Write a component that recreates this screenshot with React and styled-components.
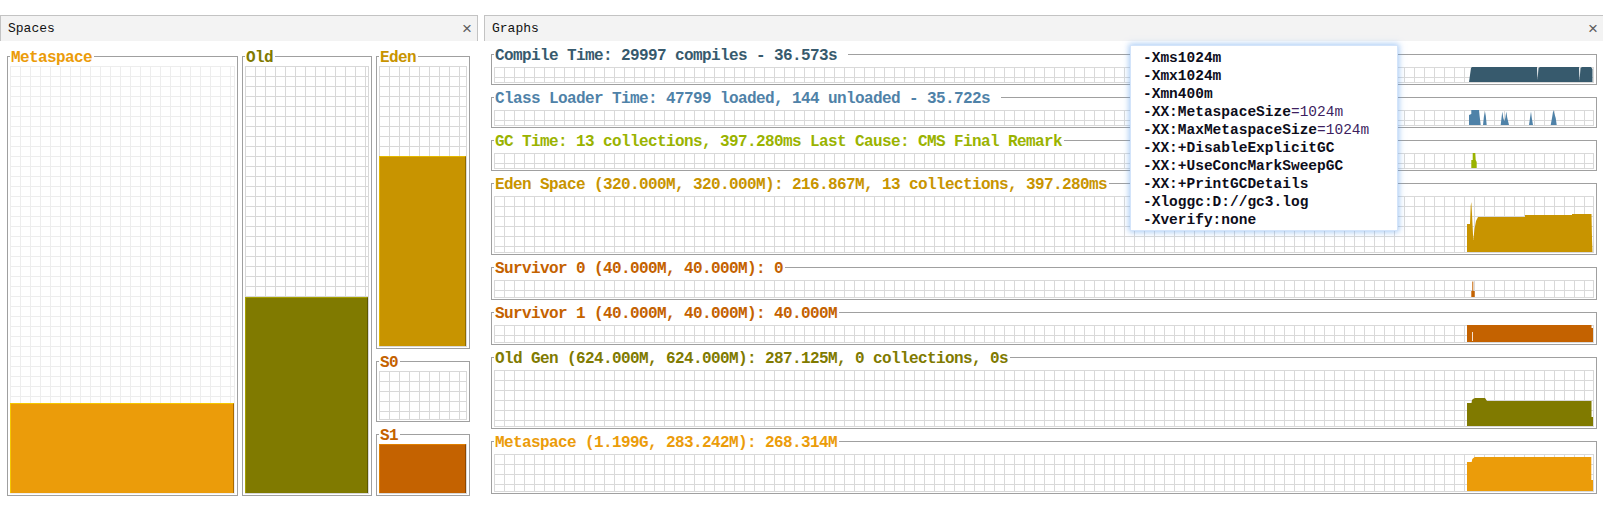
import React from "react";
import styled, { createGlobalStyle } from "styled-components";

const GlobalStyle = createGlobalStyle`
  html, body {
    margin: 0;
    padding: 0;
    background: #ffffff;
  }
  body {
    font-family: "Liberation Mono", "DejaVu Sans Mono", monospace;
  }
`;

const Page = styled.div`
  position: relative;
  width: 1603px;
  height: 505px;
  padding-top: 15px;
  box-sizing: border-box;
  display: flex;
  gap: 6px;
  overflow: hidden;
`;

const Panel = styled.section`
  flex: none;
  width: ${(p) => p.$width}px;
  display: flex;
  flex-direction: column;
`;

const PanelHeader = styled.header`
  flex: none;
  height: 25px;
  display: flex;
  align-items: center;
  justify-content: space-between;
  padding: 0 5px 0 7px;
  border: 1px solid #c3c3c3;
  border-bottom: none;
  background: #f3f3f3;
  font-size: 13px;
  color: #111111;
`;

const Close = styled.span`
  font-family: "Liberation Sans", Arial, sans-serif;
  font-size: 17px;
  line-height: 1;
  color: #5c5c5c;
`;

const SpacesBody = styled.div`
  display: flex;
  gap: 4px;
  padding: 6px 0 0 7px;
`;

const Column = styled.div`
  flex: none;
  width: ${(p) => p.$width}px;
  display: flex;
  flex-direction: column;
  gap: 3px;
`;

const GraphsBody = styled.div`
  display: flex;
  flex-direction: column;
  gap: 3px;
  padding: 4px 7px 0 7px;
`;

const Box = styled.fieldset`
  margin: 0;
  min-width: 0;
  padding: ${(p) => (p.$compact ? "0 2px 1px" : "3px 2px 1px")};
  border: 1px solid #a0a0a0;
`;

const Title = styled.legend`
  padding: 4px 2px 0 1px;
  font-size: 16px;
  letter-spacing: -0.6px;
  font-weight: bold;
  line-height: 15px;
  white-space: pre;
  color: ${(p) => p.$color};
`;

const Grid = styled.div`
  height: ${(p) => p.$h}px;
  box-sizing: border-box;
  display: flex;
  flex-direction: ${(p) => (p.$vertical ? "column" : "row")};
  justify-content: flex-end;
  border-right: 1px solid ${(p) => p.$line};
  border-bottom: 1px solid ${(p) => p.$line};
  background-color: #ffffff;
  background-image: linear-gradient(to right, ${(p) => p.$line} 1px, transparent 1px),
    linear-gradient(to bottom, ${(p) => p.$line} 1px, transparent 1px);
  background-size: 10px 10px;
`;

const Fill = styled.div`
  flex: none;
  height: ${(p) => p.$pct}%;
  box-sizing: border-box;
  background: ${(p) => p.$color};
  border-top: 1px solid ${(p) => p.$light};
  border-left: 1px solid ${(p) => p.$light};
  border-right: 1px solid ${(p) => p.$dark};
`;

const Plot = styled.svg`
  flex: none;
  display: block;
  width: 126px;
  height: 100%;
`;

const Tip = styled.div`
  position: absolute;
  left: 1130px;
  top: 45px;
  z-index: 2;
  width: 268px;
  box-sizing: border-box;
  padding: 3px 8px 1px 12px;
  background: #ffffff;
  border: 1px solid #d3e4fa;
  box-shadow: 0 0 6px 1px rgba(90, 155, 235, 0.55);
`;

const TipRow = styled.div`
  font-size: 14.5px;
  line-height: 18px;
  font-weight: bold;
  color: #0d0d1a;
  white-space: nowrap;
`;

const TipValue = styled.span`
  font-weight: normal;
  color: #3d1f5f;
`;

const spaces = [
  {
    width: 231,
    items: [
      { title: "Metaspace", color: "#eb9c0a", h: 428, line: "#ededed", fill: { pct: 21.1, color: "#eb9c0a", light: "#f6c800", dark: "#a86a00" } },
    ],
  },
  {
    width: 130,
    items: [
      { title: "Old", color: "#807a00", h: 428, line: "#d8d8d8", fill: { pct: 45.9, color: "#807a00", light: "#a6a000", dark: "#5c5800" } },
    ],
  },
  {
    width: 94,
    items: [
      { title: "Eden", color: "#c89400", h: 281, line: "#d8d8d8", fill: { pct: 67.9, color: "#c89400", light: "#e4b800", dark: "#8e6a00" } },
      { title: "S0", color: "#c46200", h: 49, line: "#d8d8d8" },
      { title: "S1", color: "#c46200", h: 50, line: "#d8d8d8", fill: { pct: 100, color: "#c46200", light: "#e08000", dark: "#8c4600" } },
    ],
  },
];

const graphs = [
  {
    title: "Compile Time: 29997 compiles - 36.573s ",
    color: "#375a6d",
    h: 16,
    vh: 15,
    shapes: ["2,15 4,1 5,0 70,0 70.5,13 71.5,1 73,0 112,0 112.5,14 113.5,1 115,0 124,0 125.5,2 125.5,15"],
  },
  {
    title: "Class Loader Time: 47799 loaded, 144 unloaded - 35.722s ",
    color: "#4f82a8",
    h: 16,
    vh: 15,
    shapes: [
      "2,15 2,5 4.3,4 4.3,0 12,0 12.5,5 13.7,15",
      "16,15 17,6 18,1.5 18.8,6 19.7,15",
      "33.7,15 34.5,8 35.3,1.5 36.3,8 37.3,11 38.3,8 39.3,1.5 40.3,8 42,15",
      "62,15 63,8 64,1.5 64.8,8 66,15",
      "83.7,15 85,8 86.3,0 87.5,4 88.7,8 89.7,15",
    ],
  },
  {
    title: "GC Time: 13 collections, 397.280ms Last Cause: CMS Final Remark",
    color: "#9ab300",
    h: 16,
    vh: 15,
    shapes: ["4.3,15 4.3,7 5.7,7 5.7,0 8.3,0 8.7,7 9.7,9 9.7,15"],
  },
  {
    title: "Eden Space (320.000M, 320.000M): 216.867M, 13 collections, 397.280ms",
    color: "#c89400",
    h: 57,
    vh: 56,
    shapes: ["0,56 0,28 3,28 3.7,10 4.3,6 5,18 6.3,44 7.5,33 9,25 11,21 58,21 58,19 105,19 105,18 124.5,18 125,42 125.5,56"],
  },
  {
    title: "Survivor 0 (40.000M, 40.000M): 0",
    color: "#c46200",
    h: 18,
    vh: 17,
    shapes: ["4.3,17 4.3,11 5.3,11 5.3,1.5 6.3,1.5 6.3,11 7.7,11 7.7,17"],
  },
  {
    title: "Survivor 1 (40.000M, 40.000M): 40.000M",
    color: "#c46200",
    h: 18,
    vh: 17,
    shapes: ["0,17 0,0 124.5,0 124.5,3 126,3 126,17"],
    notch: "5,7 6,7 6,16 5,16",
  },
  {
    title: "Old Gen (624.000M, 624.000M): 287.125M, 0 collections, 0s",
    color: "#807a00",
    h: 57,
    vh: 56,
    shapes: ["0,56 0,33 4.5,33 5,30 6,29 8,28 18,28 20,31 124.5,31 124.5,47 126,47 126,56"],
  },
  {
    title: "Metaspace (1.199G, 283.242M): 268.314M",
    color: "#eb9c0a",
    h: 38,
    vh: 37,
    shapes: ["0,37 0,8 4.7,8 5.3,5 7.7,3 124.3,3 124.3,26 126,26 126,37"],
  },
];

const jvmArgs = [
  ["-Xms1024m"],
  ["-Xmx1024m"],
  ["-Xmn400m"],
  ["-XX:MetaspaceSize", "=1024m"],
  ["-XX:MaxMetaspaceSize", "=1024m"],
  ["-XX:+DisableExplicitGC"],
  ["-XX:+UseConcMarkSweepGC"],
  ["-XX:+PrintGCDetails"],
  ["-Xloggc:D://gc3.log"],
  ["-Xverify:none"],
];

const GraphBox = ({ graph }) => (
  <Box>
    <Title $color={graph.color}>{graph.title}</Title>
    <Grid $h={graph.h} $line="#d9d9d9">
      <Plot viewBox={`0 0 126 ${graph.vh}`} preserveAspectRatio="none">
        {graph.shapes.map((pts) => (
          <polygon key={pts} points={pts} fill={graph.color} />
        ))}
        {graph.notch && <polygon points={graph.notch} fill="#f6e2d2" />}
      </Plot>
    </Grid>
  </Box>
);

const SpaceBox = ({ item }) => (
  <Box $compact>
    <Title $color={item.color}>{item.title}</Title>
    <Grid $h={item.h} $line={item.line} $vertical>
      {item.fill && (
        <Fill
          $pct={item.fill.pct}
          $color={item.fill.color}
          $light={item.fill.light}
          $dark={item.fill.dark}
        />
      )}
    </Grid>
  </Box>
);

export default function App() {
  return (
    <>
      <GlobalStyle />
      <Page>
        <Panel $width={478}>
          <PanelHeader>
            <span>Spaces</span>
            <Close>×</Close>
          </PanelHeader>
          <SpacesBody>
            {spaces.map((col, i) => (
              <Column key={i} $width={col.width}>
                {col.items.map((item) => (
                  <SpaceBox key={item.title} item={item} />
                ))}
              </Column>
            ))}
          </SpacesBody>
        </Panel>
        <Panel $width={1120}>
          <PanelHeader>
            <span>Graphs</span>
            <Close>×</Close>
          </PanelHeader>
          <GraphsBody>
            {graphs.map((g) => (
              <GraphBox key={g.title} graph={g} />
            ))}
          </GraphsBody>
        </Panel>
        <Tip>
          {jvmArgs.map(([key, value]) => (
            <TipRow key={key}>
              {key}
              {value && <TipValue>{value}</TipValue>}
            </TipRow>
          ))}
        </Tip>
      </Page>
    </>
  );
}
